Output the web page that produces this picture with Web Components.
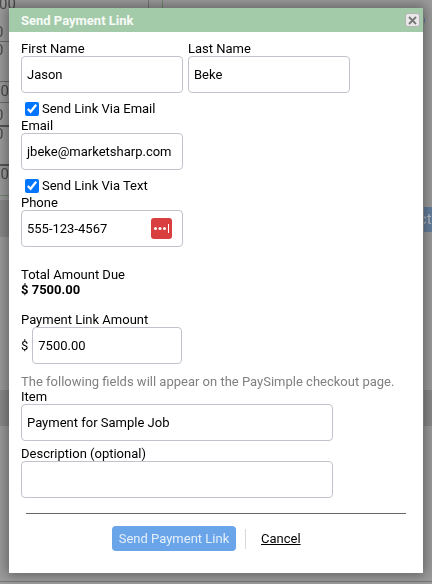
<!DOCTYPE html>
<html>
<head>
<meta charset="utf-8">
<title>Send Payment Link</title>
<style>
  html, body { margin: 0; height: 100%; overflow: hidden; }
  body { background: #9c9c9c; font-family: Roboto, "Liberation Sans", sans-serif; font-size: 13px; color: #000; }
</style>
</head>
<body>
<page-backdrop></page-backdrop>
<pay-dialog heading="Send Payment Link">
  <field-row>
    <pay-field label="First Name">Jason</pay-field>
    <pay-field label="Last Name">Beke</pay-field>
  </field-row>
  <check-row style="margin-top:8px">Send Link Via Email</check-row>
  <pay-field label="Email">jbeke@marketsharp.com</pay-field>
  <check-row style="margin-top:8px">Send Link Via Text</check-row>
  <pay-field label="Phone">555-123-4567<pass-icon slot="after"></pass-icon></pay-field>
  <total-due style="margin-top:20px" amount="$ 7500.00">Total Amount Due</total-due>
  <pay-field style="margin-top:15px" label="Payment Link Amount" prefix="$" width="150">7500.00</pay-field>
  <hint-text style="margin-top:10px">The following fields will appear on the PaySimple checkout page.</hint-text>
  <pay-field label="Item" width="312">Payment for Sample Job</pay-field>
  <pay-field style="margin-top:5px" label="Description (optional)" width="312"></pay-field>
  <dialog-actions slot="footer" submit="Send Payment Link" cancel="Cancel"></dialog-actions>
</pay-dialog>

<script>
class PageBackdrop extends HTMLElement {
  constructor() {
    super();
    const root = this.attachShadow({ mode: 'open' });
    root.innerHTML = `
<style>
  :host{
    position: fixed;
    inset: 0;
    display: block;
    overflow: hidden;
    color: #4a4a4a;
    font: 15px Roboto, "Liberation Sans", sans-serif;
  }
  i{
    position: absolute;
    display: block;
    font-style: normal;
    line-height: 14px;
  }
  .line{ left: 0; width: 9px; height: 1px; background: #6b6b6b; }
  .tint{ background: #8a8a8a; }
  .blue{ background: #667f9d; color: #b5bcc4; overflow: hidden; text-indent: -5px; }
</style>
<i style="left:-1px;top:-3px">00</i>
<i style="left:-5px;top:25px">0</i>
<i class="line" style="top:41px"></i>
<i style="left:-5px;top:43px">0</i>
<i class="line" style="top:81px"></i>
<i style="left:-8px;top:84px">00</i>
<i class="line" style="top:102px"></i>
<i style="left:-5px;top:108px">0</i>
<i class="line" style="top:125px;height:2px;background:#555"></i>
<i style="left:-5px;top:127px">0</i>
<i class="line" style="top:164px;height:2px;background:#555"></i>
<i style="left:-8px;top:167px">00</i>
<i class="line" style="top:195px;background:#6f8a6b"></i>
<i class="tint" style="left:0;top:200px;width:9px;height:37px"></i>
<i class="tint" style="left:0;top:390px;width:9px;height:36px"></i>
<i class="tint" style="left:424px;top:390px;width:8px;height:36px"></i>
<i style="left:148px;top:0;width:1px;height:8px;background:#777"></i>
<i style="left:162px;top:0;width:1px;height:8px;background:#6f8a6b"></i>
<i style="left:424px;top:18px;width:1px;height:5px;background:#667f9d"></i>
<i class="blue" style="left:424px;top:207px;width:8px;height:25px;line-height:25px">ct</i>
<i style="left:0;top:581px;width:432px;height:1px;background:#777"></i>`;
  }
}

class PayDialog extends HTMLElement {
  constructor() {
    super();
    const root = this.attachShadow({ mode: 'open' });
    root.innerHTML = `
<style>
  :host{
    position: absolute;
    left: 9px;
    top: 8px;
    width: 414px;
    height: 565px;
    display: flex;
    flex-direction: column;
    box-sizing: border-box;
    background: #fff;
    box-shadow: 0 0 12px 2px rgba(0,0,0,.4);
  }
  header{
    height: 24px;
    flex: none;
    display: flex;
    align-items: center;
    justify-content: space-between;
    padding: 0 3px 0 12px;
    background: #a3cbaa;
    color: #f7faf7;
    font-weight: 700;
    font-size: 13px;
  }
  button{
    width: 15px;
    height: 14px;
    padding: 0;
    display: flex;
    align-items: center;
    justify-content: center;
    background: #e8e8e8;
    border: 1px solid #b4b4b4;
    border-radius: 3px;
  }
  .body{
    flex: 1;
    padding: 9px 12px 0;
    display: flex;
    flex-direction: column;
  }
  .foot{ padding: 0 17px 22px; }
</style>
<header>
  <span class="title"></span>
  <button aria-label="Close">
    <svg width="9" height="9" viewBox="0 0 9 9"><path d="M1 1l7 7M8 1L1 8" stroke="#777" stroke-width="1.8"/></svg>
  </button>
</header>
<div class="body"><slot></slot></div>
<div class="foot"><slot name="footer"></slot></div>`;
    root.querySelector('.title').textContent = this.getAttribute('heading');
  }
}

class FieldRow extends HTMLElement {
  constructor() {
    super();
    this.attachShadow({ mode: 'open' }).innerHTML = `
<style>:host{ display: flex; gap: 5px; }</style><slot></slot>`;
  }
}

class PayField extends HTMLElement {
  constructor() {
    super();
    const root = this.attachShadow({ mode: 'open' });
    const width = this.getAttribute('width') || 162;
    const prefix = this.getAttribute('prefix');
    root.innerHTML = `
<style>
  :host{ display: block; line-height: 15px; }
  .wrap{ display: flex; align-items: center; gap: 4px; }
  .box{
    box-sizing: border-box;
    height: 37px;
    display: flex;
    align-items: center;
    justify-content: space-between;
    padding: 0 10px 0 5px;
    background: #fff;
    border: 1px solid #c3c1cb;
    border-radius: 4px;
    font-size: 13px;
  }
  .label{ display: block; height: 15px; }
</style>
<span class="label"></span>
<div class="wrap">
  ${prefix ? `<span>${prefix}</span>` : ''}
  <div class="box" style="width:${width}px"><span><slot></slot></span><slot name="after"></slot></div>
</div>`;
    root.querySelector('.label').textContent = this.getAttribute('label');
  }
}

class CheckRow extends HTMLElement {
  constructor() {
    super();
    this.attachShadow({ mode: 'open' }).innerHTML = `
<style>
  :host{ display: flex; align-items: center; gap: 3px; height: 15px; padding-left: 4px; margin-bottom: 2px; }
  input{ width: 14px; height: 14px; margin: 0; accent-color: #0075ff; }
</style>
<input type="checkbox" checked><span><slot></slot></span>`;
  }
}

class PassIcon extends HTMLElement {
  constructor() {
    super();
    this.attachShadow({ mode: 'open' }).innerHTML = `
<style>:host{ display: block; width: 21px; height: 21px; }</style>
<svg width="21" height="21" viewBox="0 0 21 21">
  <rect width="21" height="21" rx="3" fill="#d93f3f"/>
  <circle cx="4.5" cy="10.5" r="1.5" fill="#fff"/>
  <circle cx="9" cy="10.5" r="1.5" fill="#fff"/>
  <circle cx="13.5" cy="10.5" r="1.5" fill="#fff"/>
  <rect x="17" y="6" width="1" height="9" fill="#fff"/>
</svg>`;
  }
}

class TotalDue extends HTMLElement {
  constructor() {
    super();
    const root = this.attachShadow({ mode: 'open' });
    root.innerHTML = `
<style>
  :host{ display: block; line-height: 15px; }
  b{ display: block; }
</style>
<slot></slot><b></b>`;
    root.querySelector('b').textContent = this.getAttribute('amount');
  }
}

class HintText extends HTMLElement {
  constructor() {
    super();
    this.attachShadow({ mode: 'open' }).innerHTML = `
<style>:host{ display: block; color: #808080; line-height: 15px; white-space: nowrap; }</style><slot></slot>`;
  }
}

class DialogActions extends HTMLElement {
  constructor() {
    super();
    const root = this.attachShadow({ mode: 'open' });
    root.innerHTML = `
<style>
  :host{
    display: flex;
    align-items: center;
    border-top: 1px solid #666;
    padding: 12px 0 0 86px;
  }
  .send{
    width: 124px;
    height: 25px;
    box-sizing: border-box;
    display: flex;
    align-items: center;
    justify-content: center;
    background: #6aa5ea;
    color: #e4effb;
    border-radius: 4px;
  }
  .sep{ width: 1px; height: 20px; margin: 0 15px 0 9px; background: #d8d8d8; }
  a{ color: #000; text-decoration: underline; }
</style>
<span class="send"></span><span class="sep"></span><a href="#"></a>`;
    root.querySelector('.send').textContent = this.getAttribute('submit');
    root.querySelector('a').textContent = this.getAttribute('cancel');
  }
}

customElements.define('page-backdrop', PageBackdrop);
customElements.define('pay-dialog', PayDialog);
customElements.define('field-row', FieldRow);
customElements.define('pay-field', PayField);
customElements.define('check-row', CheckRow);
customElements.define('pass-icon', PassIcon);
customElements.define('total-due', TotalDue);
customElements.define('hint-text', HintText);
customElements.define('dialog-actions', DialogActions);
</script>
</body>
</html>
